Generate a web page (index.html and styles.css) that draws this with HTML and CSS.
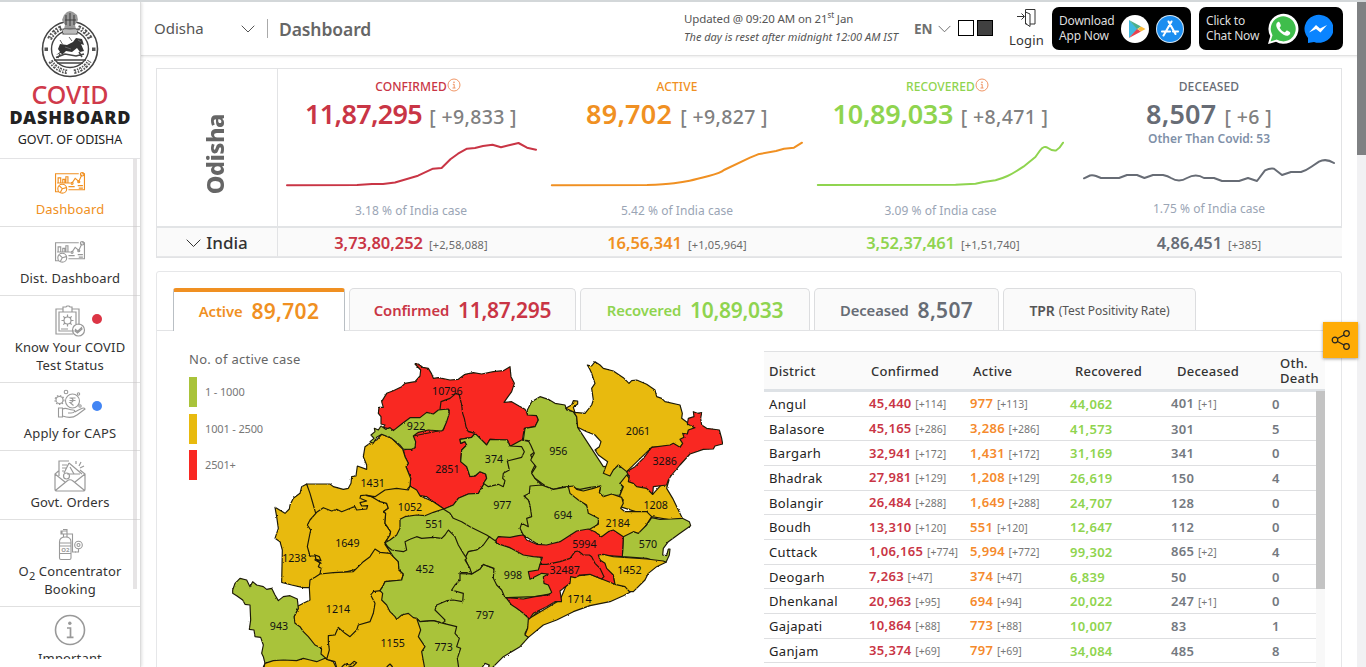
FILE: index.html
```html
<!DOCTYPE html>
<html lang="en">
<head>
<meta charset="utf-8">
<title>COVID Dashboard - Govt. of Odisha</title>
<link rel="stylesheet" href="styles.css">
</head>
<body>
<svg class="defs" width="0" height="0">
  <defs>
    <g id="ic-dash" fill="none" stroke="currentColor" stroke-width="1.1">
      <path d="M5 20H1.500V2.500H24M27 2.500H29.500V18H14"/>
      <path d="M3 11.500H16M4 11V6.500H6.500V11M8.500 11V8H10.500V11M11.500 11V5.500H13.500V11"/>
      <path d="M17.500 11.500L20.500 7L24 10L27 3.500"/><circle cx="27.300" cy="3" r="1.700"/><circle cx="24" cy="10.300" r="1"/><circle cx="17.500" cy="11.800" r="1"/>
      <circle cx="8" cy="17" r="4.300"/><path d="M8 17L5 14M8 17L12 16M8 17L6 21"/><path d="M14 15H20M23 14H28M24 16.500H28"/>
    </g>
    <g id="ic-info"><circle cx="7" cy="7" r="6" fill="none" stroke="currentColor" stroke-width=".9"/><circle cx="7" cy="4.200" r=".8" fill="currentColor"/><path d="M5.800 6.300H7.200V10M5.500 10H8.500" fill="none" stroke="currentColor" stroke-width=".9"/></g>
  </defs>
</svg>
<div class="page">
  <aside class="side">
    <div class="brand">
      <svg class="seal" width="58" height="70" viewBox="0 0 58 70">
        <circle cx="29" cy="38" r="27.500" fill="#fff" stroke="#444" stroke-width="1.600"/>
        <path d="M8.500 28A23 23 0 0 1 21 16.500M37 16.500A23 23 0 0 1 49.500 28" fill="none" stroke="#555" stroke-width="5" stroke-dasharray="2.600 1.200 1.800 1.400"/>
        <path d="M8.500 28A23 23 0 0 1 21 16.500M37 16.500A23 23 0 0 1 49.500 28" fill="none" stroke="#fff" stroke-width="1.300" stroke-dasharray="1.600 1.700"/>
        <path d="M9.500 50A23 23 0 0 0 26 60.800M33 60.800A23 23 0 0 0 48.500 50" fill="none" stroke="#555" stroke-width="4.600" stroke-dasharray="2.200 1.300 1.500 1.100"/>
        <path d="M9.500 50A23 23 0 0 0 26 60.800M33 60.800A23 23 0 0 0 48.500 50" fill="none" stroke="#fff" stroke-width="1.200" stroke-dasharray="1.300 1.900"/>
        <circle cx="29" cy="38" r="18.500" fill="#fff" stroke="#444" stroke-width="1.400"/>
        <rect x="3.500" y="36.500" width="3.500" height="3.500" fill="#555"/><rect x="51" y="36.500" width="3.500" height="3.500" fill="#555"/>
        <path d="M15 44L19 41L17 38L19 33L26 34L32 31L35 27L41 28L43 34L40 33L43 40L39 41L36 37L31 41L25 40L21 44L20 42Z" fill="#333"/>
        <path d="M31 30L28 26M22 34L19 29M37 29L40 31M24 36L30 38" stroke="#666" stroke-width="1" fill="none"/>
        <path d="M13 49H45M16 52H42M15 46.500L24 43L35 45L43 43M19 43L17 47M38 41L41 46" stroke="#444" stroke-width="1.500" fill="none"/>
        <path d="M23 4L26 1L29 0L32 1L36 4L37 9L34 14L35 18H23L24 14L21 9Z" fill="#999"/>
        <path d="M25 4V14M29 2V15M33 4V14M24 9H35M22 18H36V23H22Z" stroke="#444" stroke-width="1.100" fill="none"/>
        <path d="M22 19H36V22H22Z" fill="#bbb"/>
      </svg>
      <div class="covid">COVID</div>
      <div class="dash">DASHBOARD</div>
      <div class="govt">GOVT. OF ODISHA</div>
    </div>
    <nav class="nav">
      <a class="item on"><svg width="32" height="24" viewBox="0 0 31 23"><use href="#ic-dash"/></svg><span>Dashboard</span></a>
      <a class="item"><svg width="32" height="24" viewBox="0 0 31 23"><use href="#ic-dash"/></svg><span>Dist. Dashboard</span></a>
      <a class="item tall"><i class="dot red"></i>
        <svg width="32" height="32" viewBox="0 0 32 32" fill="none" stroke="currentColor" stroke-width="1.200"><path d="M19 29H2V4H9V2H12L13 1H15L16 2H18V4H25V20M20 26H5V7H22V19M9 4V7H18V4"/><circle cx="13.500" cy="15.500" r="3.500"/><path d="M13.500 9.500V12M13.500 19V21.500M7.500 15.500H10M17 15.500H19.500M9.300 11.300L11 13M16 18L17.700 19.700M17.700 11.300L16 13M9.300 19.700L11 18M7 24H14"/><circle cx="24.500" cy="25" r="6"/><path d="M21.500 24.500L23.500 26.500L27.500 22.500L28 24L23.500 28L21 26Z"/></svg>
        <span>Know Your COVID<br>Test Status</span></a>
      <a class="item"><i class="dot blue"></i>
        <svg width="32" height="30" viewBox="0 0 32 30" fill="none" stroke="currentColor" stroke-width="1.100"><circle cx="18.500" cy="12" r="7"/><path d="M15.500 9H21.500M15.500 11.500H21.500M16 9C20 9 20 13.500 16 13.500L19.500 16.500"/><circle cx="5.500" cy="11" r="3.500"/><circle cx="5.500" cy="11" r="4.500" stroke-dasharray="1.500 1.500"/><circle cx="12" cy="3" r="1.800"/><circle cx="24.500" cy="5" r="1.200"/><circle cx="26" cy="17" r="1.200"/><path d="M4.500 19H8.500V28H4.500ZM8.500 20C13 18 14 21 19 21C22 21 21 24 17 24H14M8.500 27C14 29 19 29 23 26L31 20C30 18 28 19 21 23"/></svg>
        <span>Apply for CAPS</span></a>
      <a class="item go">
        <svg width="32" height="32" viewBox="0 0 32 32" fill="none" stroke="currentColor" stroke-width="1.200"><path d="M4.500 11L1 14V29Q1 31 3 31H29Q31 31 31 29V14L26 10M1 14L11 22M31 14L21 22M2 30L13 21Q16 18.500 19 21L30 30M5 16V1H15M8 5H13M8 8H12M8 11H10M15 3L28 14M15 3L10 13M13 14L26 14"/><circle cx="12.500" cy="16" r="3"/><path d="M22 4V1M25 6L27 2M26 8L30 6M16 7L20 14"/></svg>
        <span>Govt. Orders</span></a>
      <a class="item tall o2">
        <svg width="32" height="32" viewBox="0 0 32 32" fill="none" stroke="currentColor" stroke-width="1.100"><path d="M5.500 29V13Q5.500 8 11.500 8Q17 8 17 13V29Q17 30.500 15.500 30.500H7Q5.500 30.500 5.500 29ZM5.500 14H17M5.500 17H17M5.500 24.500H17M9.500 8V5H13V8M9.500 5H7V2H13V5H18.500V23H22M13 2V0.500H9M8 2V5"/><circle cx="24.500" cy="16" r="3.800"/><circle cx="24.500" cy="16" r="1.500"/><path d="M24.500 20V23H21"/><text x="7.200" y="23" class="o2t">O2</text></svg>
        <span>O<sub>2</sub> Concentrator<br>Booking</span></a>
      <a class="item last">
        <svg width="32" height="32" viewBox="0 0 32 32"><circle cx="16" cy="16" r="14.500" fill="none" stroke="currentColor" stroke-width="1.600"/><circle cx="15.800" cy="9.300" r="1.700" fill="currentColor"/><path d="M13 14H16.500V23M12.800 23.300H19.500" fill="none" stroke="currentColor" stroke-width="1.700"/></svg>
        <span>Important</span></a>
      <i class="navbar"></i>
    </nav>
  </aside>
  <div class="body">
    <header class="top">
      <div class="state"><span>Odisha</span><svg width="14" height="8" viewBox="0 0 14 8"><path d="M.7.7L7 7L13.300.7" fill="none" stroke="#555" stroke-width="1"/></svg></div>
      <h1>Dashboard</h1>
      <div class="upd"><div>Updated @ 09:20 AM on 21<sup>st</sup> Jan</div><em>The day is reset after midnight 12:00 AM IST</em></div>
      <div class="lang">EN<svg width="13" height="8" viewBox="0 0 14 8"><path d="M.7.7L7 7L13.300.7" fill="none" stroke="#666" stroke-width="1"/></svg></div>
      <div class="theme"><i></i><i class="dk"></i></div>
      <div class="login"><svg width="20" height="20" viewBox="0 0 20 20" fill="none" stroke="#333" stroke-width="1"><path d="M0 8.500H7M4.500 5.500L7.500 8.500L4.500 11.500M8.500 5V1.500H18V16H13M8.500 12V16H10M13 18.500L8.500 15.500V4L13 6Z"/></svg><span>Login</span></div>
      <div class="pill p1"><span>Download<br>App Now</span>
        <svg width="28" height="28" viewBox="0 0 28 28"><circle cx="14" cy="14" r="14" fill="#fff"/><path d="M8 5V23L17 14Z" fill="#3fb9e0"/><path d="M8 5L16 14L20 11.500Z" fill="#4cae8a"/><path d="M8 23L16 14L20 16.500Z" fill="#e8414e"/><path d="M20 11.500L24.500 14L20 16.500L16.500 14Z" fill="#f8b93b"/></svg>
        <svg width="28" height="28" viewBox="0 0 28 28"><circle cx="14" cy="14" r="14" fill="#d5e6f5"/><circle cx="14" cy="14" r="13" fill="#1c8ef0"/><path d="M15.500 6.500L9 18M12.500 6.500L19.500 19M6 16.500H14M17 16.500H22M8.300 19.200L7.500 20.500" stroke="#fff" stroke-width="2.100" stroke-linecap="round"/></svg>
      </div>
      <div class="pill p2"><span>Click to<br>Chat Now</span>
        <svg width="32" height="32" viewBox="0 0 32 32"><path d="M1 31L3.300 23A15 15 0 1 1 9 28.800Z" fill="#fff"/><path d="M3.500 28.500L5.500 22.300A12.500 12.500 0 1 1 9.800 26.600Z" fill="#3fbd4b"/><path d="M11 9C8 11 9 15 13 19C17 23 21 24 23 21C24 19 22 18.500 20 17.500C19 17 18.500 20 17 19C15 18 13.500 16.500 12.800 15C12.500 14 14.500 13.500 13.500 11.500C13 10 12.300 8 11 9Z" fill="#fff"/></svg>
        <svg width="30" height="30" viewBox="0 0 30 30"><path d="M5 29V24A14.500 14 0 1 1 11 28Z" fill="#0a84ff"/><path d="M6 18.500L13 11L17 14.500L24 11L17.500 18.500L13 15Z" fill="#fff"/></svg>
      </div>
    </header>
    <main class="main">
      <section class="stats">
        <div class="st"><span>Odisha</span></div>
        <div class="col c-red"><h2>CONFIRMED<svg width="14" height="14" viewBox="0 0 14 14"><use href="#ic-info"/></svg></h2><p class="num n1">11,87,295 <small>[ +9,833 ]</small></p>
          <svg class="sp" viewBox="278 131 266 60"><path d="M287 184.300L357 184L372 183L383 183L395 181.500L418 174.700L433 167.700L441.600 167L450.400 158.300L458 152.700L467 147.700L475 147L483 145L492.500 143.700L501 146.300L510 144L518.500 142L527 146.700L536 148.700"/></svg>
          <p class="pct">3.18 % of India case</p></div>
        <div class="col c-org"><h2>ACTIVE</h2><p class="num n2">89,702 <small>[ +9,827 ]</small></p>
          <svg class="sp" viewBox="544 131 266 60"><path d="M551.800 184.300L647 184Q665 183.500 674 182.300T689.600 179.700T708.700 175T724 169L750 156.700L758 153.300L776 150L784 147.700L794 146.700L802 141.700"/></svg>
          <p class="pct">5.42 % of India case</p></div>
        <div class="col c-grn sh"><h2>RECOVERED<svg width="14" height="14" viewBox="0 0 14 14"><use href="#ic-info"/></svg></h2><p class="num n3">10,89,033 <small>[ +8,471 ]</small></p>
          <svg class="sp" viewBox="810 131 266 60"><path d="M817.800 184L955.600 183.700L975.500 182.700L983.500 181L995.500 179.300Q1002 177.500 1007.500 175T1023.400 165.700L1035.400 156L1040 149.500Q1044 144 1048 147T1056 149.500Q1060 147 1063 141.700"/></svg>
          <p class="pct">3.09 % of India case</p></div>
        <div class="col c-gry dec"><h2>DECEASED</h2><p class="num n4">8,507 <small>[ +6 ]</small></p>
          <svg class="sp" viewBox="1076 131 266 60"><path d="M1084 177.300L1090 174.500Q1093 174 1096 175L1101 177H1119L1127 174H1137L1144.400 177L1153 174H1163Q1168 175 1171 177Q1179 182 1187 177Q1196 172 1204 177H1214L1222 180H1239L1248 177L1257 180L1265 169.300Q1270 167 1274 167.700L1282 174L1291 171H1301Q1307 169 1311 166L1319 160.700Q1326 157 1334 162"/></svg>
          <b class="other">Other Than Covid: 53</b>
          <p class="pct">1.75 % of India case</p></div>
        <div class="ind lab"><svg width="15" height="9" viewBox="0 0 15 9"><path d="M.7.7L7.500 7.500L14.300.7" fill="none" stroke="#333"/></svg>India</div>
        <div class="ind c-red">3,73,80,252<small>[+2,58,088]</small></div>
        <div class="ind c-org">16,56,341<small>[+1,05,964]</small></div>
        <div class="ind c-grn">3,52,37,461<small>[+1,51,740]</small></div>
        <div class="ind c-gry">4,86,451<small>[+385]</small></div>
      </section>
      <section class="panel">
        <div class="tabs">
          <div class="tab act c-org t1">Active<b>89,702</b></div>
          <div class="tab c-red t2">Confirmed<b>11,87,295</b></div>
          <div class="tab c-grn t3">Recovered<b>10,89,033</b></div>
          <div class="tab c-gry t4">Deceased<b>8,507</b></div>
          <div class="tab c-tpr t5">TPR<small>(Test Positivity Rate)</small></div>
        </div>
        <div class="content">
          <div class="mapbox">
            <div class="leg"><h3>No. of active case</h3>
              <div><i class="k1"></i>1 - 1000</div><div><i class="k2"></i>1001 - 2500</div><div><i class="k3"></i>2501+</div>
            </div>
            <svg class="map" width="520" height="317" viewBox="0 0 1560 951">
              <defs><filter id="rough" x="0" y="0" width="100%" height="100%" color-interpolation-filters="sRGB"><feTurbulence type="fractalNoise" baseFrequency="0.16" numOctaves="2" seed="4"/><feDisplacementMap in="SourceGraphic" scale="6" xChannelSelector="R" yChannelSelector="G"/></filter></defs>
              <g class="shapes" filter="url(#rough)">
                <path class="g base" d="M500 560L740 600L1000 740L730 945L600 830L500 760Z"/>
                <path class="g base" d="M1150 350L1225 372L1215 430L1130 430L700 470L900 300Z"/>
                <path class="y base" d="M300 480L500 440L560 500L500 720L320 800L270 700Z"/>
                <path class="r" d="M585 42L595 42L608 52L625 55L634 70L640 85L655 83L690 90L715 88L735 73L760 68L785 72L820 65L850 62L870 50L873 80L883 100L875 125L862 143L852 157L875 155L897 168L915 178L922 192L950 195L955 210L945 230L913 235L908 265L905 288L870 288L862 270L810 268L800 285L790 275L765 250L745 245L600 300L520 240L490 232L495 225L483 222L483 200L475 190L477 172L490 172L485 155L500 130L520 122L545 110L555 100L585 95L600 78L602 60Z"/>
                <path class="r" d="M585 293L580 258L670 240L688 180L660 178L663 155L690 145L708 130L718 135L725 165L728 190L733 205L738 230L745 245L765 250L755 262L720 268L722 280L735 275L740 285L725 300L722 335L740 350L750 380L765 378L780 365L797 372L800 385L790 405L775 430L745 432L715 445L700 465L672 477L640 455L620 440L600 437L570 408L572 385L558 350L565 340L555 320L550 300Z"/>
                <path class="y" d="M165 472L175 478L195 490L208 477L210 465L220 445L240 430L245 410L260 402L300 480L310 680L268 713L250 713L215 705L185 697L187 600L180 575L165 565L175 535L170 500Z"/>
                <path class="y" d="M260 402L330 402L340 410L370 418L385 415L393 400L395 380L408 378L412 348L440 358L440 345L430 320L435 290L450 280L470 270L485 253L515 265L548 297L555 320L565 340L558 350L572 385L570 408L560 420L480 480L440 500L290 500L280 465L270 430Z"/>
                <path class="g" d="M450 275L462 265L453 255L465 245L463 235L475 240L483 228L497 238L510 233L520 242L545 222L570 203L600 203L620 187L640 192L655 180L685 177L688 190L680 215L670 238L665 243L625 240L595 247L580 258L587 275L585 293L575 298L550 297L540 285L515 265L485 253L470 262L460 280Z"/>
                <path class="y" d="M290 487L310 473L335 483L350 478L365 485L395 473L405 470L410 480L440 477L443 467L425 468L420 458L440 453L420 445L422 437L440 435L455 440L500 460L505 475L490 485L497 490L495 520L512 545L510 555L495 578L520 620L480 640L340 675L300 672L303 655L295 650L300 638L285 630L290 618L270 618L262 590L272 540L262 525L270 510Z"/>
                <path class="y" d="M440 437L465 440L495 420L530 415L565 420L570 408L590 420L600 437L640 455L672 477L640 510L550 580L495 578L510 555L512 545L495 520L497 490L490 485L505 475L500 460L480 455L455 440Z"/>
                <path class="y" d="M300 672L340 668L400 665L410 655L430 635L450 620L465 597L480 607L510 610L520 620L535 635L537 660L550 672L545 690L515 693L495 695L488 710L480 722L470 760L450 830L325 925L308 925L222 820L222 800L235 775L230 770L250 760L270 750L268 713L270 690L285 682Z"/>
                <path class="g" d="M38 720L45 700L60 685L80 690L90 710L98 695L110 705L130 710L140 718L155 715L165 735L175 752L190 740L210 737L232 747L235 775L222 800L225 820L240 830L250 845L265 860L285 885L305 895L303 912L318 925L315 940L130 951L135 940L130 920L125 910L130 885L122 862L105 860L102 840L88 838L92 810L90 765L75 763L68 750L50 737L38 730Z"/>
                <path class="y" d="M130 960L135 940L160 932L190 930L230 932L250 925L270 930L290 935L315 925L340 935L352 960Z"/>
                <path class="y" d="M480 722L460 725L452 735L465 760L460 790L450 815L415 825L410 840L390 860L375 850L355 832L345 855L325 857L325 875L328 900L320 928L345 935L352 960L620 960L640 820L560 740Z"/>
                <path class="l" d="M365 951L375 942L390 945L402 934L410 938L400 948L385 951M500 951L510 942L518 951"/>
                <path class="y" d="M265 612L272 620M285 615L298 620L303 632L288 628ZM290 630L303 640L292 632"/>
                <path class="g" d="M672 477L700 465L715 445L745 432L775 430L790 405L850 300L905 270L930 275L945 305L932 315L945 345L935 365L945 385L965 405L960 560L865 565L828 570L810 600L740 640L700 560Z"/>
                <path class="g" d="M765 250L790 275L800 285L810 268L862 270L870 288L905 290L913 305L905 322L862 333L868 360L850 370L848 385L855 392L850 410L835 403L805 410L790 400L800 385L797 372L780 365L765 378L750 380L740 350L722 335L725 300L740 285L735 275L722 280L720 268L755 262Z"/>
                <path class="g" d="M922 180L935 155L960 140L985 148L1005 160L1035 165L1040 180L1060 185L1070 200L1073 232L1150 350L1220 345L1225 390L1200 400L1208 410L1200 435L1175 437L1150 440L1138 430L1142 408L1110 412L1080 418L1045 410L1025 412L1000 418L980 410L965 400L945 385L935 370L948 350L932 330L943 310L932 285L925 272L910 270L915 235L945 230L955 210L950 197L922 195Z"/>
                <path class="g" d="M495 578L510 570L530 555L540 535L540 508L555 500L590 495L615 497L640 487L670 477L690 490L700 505L725 515L750 530L800 555L810 562L805 575L790 590L770 600L745 605L735 625L600 640L515 610Z"/>
                <path class="g" d="M755 672L780 657L790 643L822 655L1000 740L928 810L923 835L915 850L925 862L900 890L850 920L810 960L700 960L600 800L690 670Z"/>
                <path class="g" d="M735 625L745 605L770 600L790 585L808 560L830 575L870 593L960 620L985 660L1000 730L945 740L855 743L845 720L830 705L820 685L822 655L800 647L790 643L780 657L755 672Z"/>
                <path class="g" d="M495 583L515 600L550 605L560 600L555 575L570 568L590 560L605 565L640 562L665 565L675 555L685 540L695 550L705 560L715 585L730 610L740 625L735 630L750 655L755 672L740 668L720 668L720 690L705 705L695 720L730 730L728 755L700 750L680 752L650 765L645 780L665 800L675 810L670 820L640 812L600 815L590 805L580 803L565 790L545 795L530 808L525 800L510 785L500 765L485 750L488 730L480 722L488 710L495 695L545 690L550 672L537 660L535 635L520 620Z"/>
                <path class="g" d="M590 805L600 815L640 812L670 820L710 830L705 850L718 865L710 890L722 895L712 925L717 960L615 960L605 905L615 890L605 875L595 860L602 840Z"/>
                <path class="g" d="M912 438L928 430L930 408L965 405L1000 418L1045 410L1140 510L1110 560L980 600L910 555L900 535L905 520L925 530L920 505L935 500L930 465L925 450Z"/>
                <path class="y" d="M1102 45L1115 48L1125 35L1140 45L1150 55L1180 63L1210 83L1227 100L1235 92L1250 90L1280 103L1305 120L1310 140L1325 145L1335 155L1380 165L1387 190L1385 205L1425 235L1380 292L1350 288L1295 292L1220 365L1195 345L1180 360L1170 378L1150 370L1163 335L1135 315L1125 300L1138 290L1143 275L1125 255L1100 245L1073 232L1070 200L1060 185L1037 175L1055 165L1060 152L1073 153L1073 162L1060 172L1065 187L1095 190L1115 165L1120 150L1115 115L1125 100L1115 70L1108 55Z"/>
                <path class="y" d="M1220 375L1235 395L1280 415L1298 433L1335 392L1347 390L1340 415L1358 445L1375 480L1387 505L1355 510L1295 500L1200 470L1210 450L1198 440L1210 410L1200 400Z"/>
                <path class="r" d="M1220 365L1245 350L1270 325L1295 292L1350 285L1360 280L1380 292L1388 280L1380 268L1392 262L1388 250L1402 252L1405 240L1425 233L1402 222L1405 205L1422 200L1420 185L1432 190L1445 188L1442 205L1445 225L1460 235L1498 240L1505 265L1508 282L1485 288L1480 297L1450 298L1410 312L1380 345L1355 375L1345 390L1340 405L1300 410L1298 433L1280 415L1250 410L1240 400L1225 395L1228 380Z"/>
                <path class="y" d="M1045 410L1060 408L1070 418L1090 423L1120 415L1142 408L1138 428L1150 440L1175 432L1205 442L1210 460L1202 475L1215 485L1250 485L1280 485L1295 500L1250 570L1150 570L1105 540L1135 523L1135 505L1105 490L1100 465L1075 450L1050 430Z"/>
                <path class="g" d="M1210 560L1240 545L1255 550L1280 525L1295 503L1320 508L1355 507L1387 505L1408 515L1412 527L1380 550L1345 575L1330 595L1328 615L1340 617L1345 597L1350 597L1348 615L1338 637L1310 635L1280 625L1207 620Z"/>
                <path class="r" d="M828 570L835 560L870 562L895 557L910 555L920 570L950 583L980 585L1020 575L1070 543L1105 537L1125 545L1145 560L1165 545L1180 540L1210 560L1207 620L1140 615L1180 675L1185 703L1120 690L960 643L967 622L940 620L910 615L870 593L830 580Z"/>
                <path class="y" d="M1135 615L1150 613L1180 620L1280 627L1330 633L1338 637L1310 650L1285 670L1275 690L1240 725L1230 725L1185 703L1180 675L1160 655L1155 640L1140 630Z"/>
                <path class="y" d="M925 807L1020 750L1050 680L1110 673L1145 687L1185 703L1215 710L1230 727L1210 737L1170 755L1110 767L1060 785L1010 810L970 825L925 862L915 855L923 835Z"/>
                <path class="r" d="M925 665L955 660L960 643L980 643L1020 635L1050 625L1065 605L1075 603L1090 615L1108 615L1115 620L1125 640L1140 655L1152 680L1145 687L1110 673L1080 675L1065 683L1052 680L1050 700L1030 715L1020 723L1025 755L1005 755L980 770L940 790L928 807L910 790L890 775L875 765L858 743L910 747L945 740L985 735L995 727L985 705L972 700L970 680L985 672L965 670L930 688Z"/>
                <path class="w" d="M785 954L795 940L808 945L805 954"/>
              </g>
              <g class="mt">
                <text x="682" y="134">10796</text><text x="588" y="240">922</text><text x="682" y="368">2851</text><text x="458" y="410">1431</text><text x="570" y="482">1052</text>
                <text x="822" y="338">374</text><text x="1015" y="314">956</text><text x="1254" y="254">2061</text><text x="1334" y="344">3286</text><text x="847" y="476">977</text><text x="1307" y="476">1208</text>
                <text x="643" y="533">551</text><text x="382" y="590">1649</text><text x="223" y="635">1238</text><text x="615" y="668">452</text><text x="354" y="788">1214</text><text x="177" y="839">943</text><text x="518" y="890">1155</text><text x="671" y="902">773</text>
                <text x="795" y="806">797</text><text x="1029" y="506">694</text><text x="1193" y="530">2184</text><text x="1093" y="594">5994</text><text x="1284" y="593">570</text><text x="879" y="686">998</text><text x="1034" y="671">32487</text><text x="1228" y="671">1452</text><text x="1078" y="758">1714</text>
              </g>
            </svg>
          </div>
          <div class="tbl">
            <div class="tr th"><span>District</span><span>Confirmed</span><span>Active</span><span>Recovered</span><span>Deceased</span><span>Oth.<br>Death</span></div>
            <div class="scroll"><div class="rows">
            <div class="tr"><span>Angul</span><b>45,440 <s>[+114]</s></b><b>977 <s>[+113]</s></b><b>44,062</b><b>401 <s>[+1]</s></b><b>0</b></div>
            <div class="tr"><span>Balasore</span><b>45,165 <s>[+286]</s></b><b>3,286 <s>[+286]</s></b><b>41,573</b><b>301</b><b>5</b></div>
            <div class="tr"><span>Bargarh</span><b>32,941 <s>[+172]</s></b><b>1,431 <s>[+172]</s></b><b>31,169</b><b>341</b><b>0</b></div>
            <div class="tr"><span>Bhadrak</span><b>27,981 <s>[+129]</s></b><b>1,208 <s>[+129]</s></b><b>26,619</b><b>150</b><b>4</b></div>
            <div class="tr"><span>Bolangir</span><b>26,484 <s>[+288]</s></b><b>1,649 <s>[+288]</s></b><b>24,707</b><b>128</b><b>0</b></div>
            <div class="tr"><span>Boudh</span><b>13,310 <s>[+120]</s></b><b>551 <s>[+120]</s></b><b>12,647</b><b>112</b><b>0</b></div>
            <div class="tr"><span>Cuttack</span><b>1,06,165 <s>[+774]</s></b><b>5,994 <s>[+772]</s></b><b>99,302</b><b>865 <s>[+2]</s></b><b>4</b></div>
            <div class="tr"><span>Deogarh</span><b>7,263 <s>[+47]</s></b><b>374 <s>[+47]</s></b><b>6,839</b><b>50</b><b>0</b></div>
            <div class="tr"><span>Dhenkanal</span><b>20,963 <s>[+95]</s></b><b>694 <s>[+94]</s></b><b>20,022</b><b>247 <s>[+1]</s></b><b>0</b></div>
            <div class="tr"><span>Gajapati</span><b>10,864 <s>[+88]</s></b><b>773 <s>[+88]</s></b><b>10,007</b><b>83</b><b>1</b></div>
            <div class="tr"><span>Ganjam</span><b>35,374 <s>[+69]</s></b><b>797 <s>[+69]</s></b><b>34,084</b><b>485</b><b>8</b></div>
            </div><div class="bar"><i></i></div></div>
          </div>
        </div>
      </section>
    </main>
  </div>
  <div class="track"><i></i></div>
  <div class="share"><svg width="20" height="22" viewBox="0 0 20 22" fill="none" stroke="#222" stroke-width="1.200"><circle cx="4" cy="11" r="2.800"/><circle cx="15.500" cy="4.500" r="2.800"/><circle cx="15.500" cy="17.500" r="2.800"/><path d="M6.500 9.600L13 5.900M6.500 12.400L13 16.100"/></svg></div>
</div>
</body>
</html>
```
FILE: styles.css
```css
* { box-sizing: border-box; margin: 0; padding: 0; }
body { font-family: "Segoe UI", "Noto Sans", sans-serif; background: #fff; overflow: hidden; color: #333; }
.defs { position: absolute; }
.page { position: relative; display: flex; width: 1366px; height: 667px; border-top: 2px solid #d3d7d9; overflow: hidden; }

.side { width: 141px; flex: none; border-right: 1px solid #dcdcdc; box-shadow: 1px 0 3px rgba(0,0,0,.13); display: flex; flex-direction: column; z-index: 2; background: #fff; }
.brand { height: 157px; padding-top: 9px; border-bottom: 1px solid #e3e3e5; text-align: center; flex: none; }
.seal { display: block; margin: 0 auto; }
.covid { color: #d03a4b; font-size: 25px; line-height: 26px; font-weight: 500; }
.dash { color: #222; font-size: 18px; line-height: 21px; font-weight: 900; letter-spacing: .8px; margin-right: -.8px; }
.govt { font-size: 12.5px; line-height: 24px; color: #222; letter-spacing: -.1px; }
.nav { height: 500px; position: relative; overflow: hidden; }
.item { position: relative; height: 68.4px; border-bottom: 1px solid #e0e0e0; display: flex; flex-direction: column; align-items: center; justify-content: flex-end; padding-bottom: 7.500px; color: #999; }
.item span { color: #333; font-size: 13px; line-height: 18.500px; letter-spacing: .15px; text-align: center; }
.item.on, .item.on span { color: #f09022; }
.item svg { margin-bottom: 5px; flex: none; }
.item.tall { height: 87px; padding-bottom: 7px; }
.item.tall svg { margin-bottom: 1px; }
.item.go svg { margin-bottom: 1px; }
.item.last { border: 0; justify-content: flex-start; padding: 7px 0 0; height: 52px; overflow: hidden; }
.item.last svg { margin-bottom: 3px; }
.item sub { font-size: 11px; line-height: 0; }
.o2t { font-size: 6px; font-weight: 700; fill: #999; stroke: none; }
.dot { position: absolute; left: 92px; top: 18px; width: 10px; height: 10px; border-radius: 50%; }
.red { background: #dc3545; } .blue { background: #4285f4; }
.navbar { position: absolute; right: 3px; top: 0; width: 4px; height: 430px; background: rgba(200,196,198,.45); }

.body { flex: 1; min-width: 0; display: flex; flex-direction: column; }
.top { height: 54px; flex: none; display: flex; align-items: center; border-bottom: 1px solid #e2e2e2; box-shadow: 0 1px 2px rgba(0,0,0,.08); padding-left: 13px; color: #555; }
.state { width: 114px; height: 19px; display: flex; align-items: center; justify-content: space-between; padding-right: 12px; border-right: 1px solid #aaa; font-size: 15px; }
.state span { padding-bottom: 2px; }
.top h1 { font-size: 17.5px; font-weight: 600; margin-left: 11px; width: 405px; color: #666; letter-spacing: -.1px; }
.upd { width: 230px; font-size: 11.500px; line-height: 18px; letter-spacing: -.12px; white-space: nowrap; margin-top: -1px; }
.upd em { display: block; font-size: 11px; letter-spacing: 0; }
.upd sup { font-size: 8px; line-height: 0; }
.lang { width: 44px; font-size: 13.500px; font-weight: 700; display: flex; align-items: center; gap: 5px; color: #707070; }
.theme { display: flex; gap: 3px; width: 51px; margin-top: -1px; }
.theme i { width: 16px; height: 16px; border: 1px solid #000; }
.theme .dk { background: #404040; }
.login { width: 35px; display: flex; flex-direction: column; align-items: center; font-size: 13px; line-height: 19px; margin-right: 8px; color: #333; letter-spacing: .2px; }
.login svg { margin: 1px 0 3px; }
.pill { height: 43px; border-radius: 7px; background: #000; color: #ddd; display: flex; align-items: center; font-size: 12px; line-height: 15px; padding-left: 7px; }
.pill span { white-space: nowrap; letter-spacing: -.2px; padding-bottom: 1px; }
.p1 { width: 139px; margin-right: 8px; }
.p1 span { width: 62px; } .p1 svg { margin-right: 7px; flex: none; }
.p2 { width: 144px; } .p2 span { width: 61px; } .p2 svg { flex: none; margin-right: 4px; }

.main { padding: 12px 25px 0 15px; flex: 1; }
.stats { width: 1186px; height: 190px; border: 1px solid #e2e3e5; display: grid; grid-template-columns: 121px repeat(4, 1fr); grid-template-rows: 157px 31px; }
.st { border-right: 1px solid #e2e3e5; display: flex; align-items: center; justify-content: center; padding: 13px 5px 0 0; }
.st span { writing-mode: vertical-rl; transform: rotate(180deg); font-size: 23.500px; font-weight: 800; color: #666; letter-spacing: -.4px; line-height: 30px; }
.c-red { color: #c93545; } .c-org { color: #f09022; } .c-grn { color: #8fd44f; } .c-gry { color: #676c75; } .c-tpr { color: #555; }
.col { display: flex; flex-direction: column; align-items: center; padding-top: 9px; position: relative; }
.col h2 { position: relative; font-size: 12px; line-height: 18px; font-weight: 500; letter-spacing: .1px; }
.col h2 svg { position: absolute; left: 100%; top: 0; color: #ee8a55; }
.num { font-size: 27px; line-height: 36px; font-weight: 600; white-space: nowrap; }
.num small { font-size: 19.500px; font-weight: 500; color: #808080; letter-spacing: .35px; margin-left: 1px; }
.n1 { letter-spacing: -.7px; } .n2 { letter-spacing: .2px; } .n3 { letter-spacing: -.3px; } .n4 { letter-spacing: .2px; }
.sp { width: 266px; height: 60px; margin-top: -3px; fill: none; stroke: currentColor; stroke-width: 2; stroke-linecap: round; stroke-linejoin: round; flex: none; }
.pct { font-size: 12px; line-height: 18px; color: #9aa5b5; letter-spacing: .04px; margin-top: 10px; }
.sh h2, .sh .num, .sh .pct { margin-left: -5px; }
.dec .pct { margin-top: 8px; }
.other { position: absolute; top: 61px; font-size: 12px; line-height: 18px; color: #8090a8; font-weight: 600; letter-spacing: 0; }
.ind { border-top: 2px solid #e2e4e6; border-bottom: 1px solid #e6e7e9; background: #fafafa; display: flex; align-items: center; justify-content: center; font-size: 16.500px; font-weight: 600; letter-spacing: -.05px; line-height: 28px; padding-top: 2px; }
.ind small { color: #6a6a6a; font-size: 11px; font-weight: 400; margin: 3px 0 0 6px; letter-spacing: .15px; }
.lab { border-right: 1px solid #e2e3e5; color: #333; gap: 5px; font-size: 17px; font-weight: 500; }

.panel { margin-top: 13px; width: 1186px; height: 420px; border: 1px solid #e6e7e9; border-radius: 3px; padding-top: 16px; }
.tabs { height: 43px; display: flex; gap: 4px; padding-left: 16px; border-bottom: 1px solid #e2e3e5; }
.tab { height: 42px; border: 1px solid #dcdddf; border-bottom: 0; border-radius: 5px 5px 0 0; background: #fafafa; display: flex; align-items: center; justify-content: center; padding-top: 1px; font-size: 14.800px; font-weight: 600; gap: 9px; letter-spacing: -.1px; }
.tab b { font-size: 21px; font-weight: 600; letter-spacing: -.3px; }
.tab.t1 b, .tab.t4 b { letter-spacing: .3px; }
.tab small { font-size: 12px; font-weight: 400; letter-spacing: -.05px; }
.act { background: #fff; border: 1px solid #b9bfc4; border-bottom: 0; border-top: 4px solid #f09022; height: 43px; padding-top: 0; padding-bottom: 1px; border-radius: 3px 3px 0 0; }
.t1 { width: 172px; } .t2 { width: 227px; } .t3 { width: 230px; } .t4 { width: 185px; } .t5 { width: 193px; gap: 4px; font-size: 14px; }
.content { display: flex; }
.mapbox { width: 607px; height: 337px; position: relative; flex: none; }
.leg { padding: 19px 0 0 32px; }
.leg h3 { font-size: 13px; font-weight: 400; line-height: 18px; color: #666; margin-bottom: 9px; letter-spacing: .3px; }
.leg div { display: flex; align-items: center; gap: 8px; font-size: 11px; color: #777; height: 30px; margin-bottom: 6.600px; letter-spacing: -.15px; line-height: 26px; }
.leg i { width: 8px; height: 30px; }
.k1 { background: #a9c33a; } .k2 { background: #e8ba0e; } .k3 { background: #f92822; }
.map { position: absolute; left: 63px; top: 19px; }
.shapes path { stroke: #1d1a08; stroke-width: 3.500; stroke-linejoin: round; }
.shapes .base { stroke: none; }
.r { fill: #f92822; } .y { fill: #e8ba0e; } .g { fill: #a9c33a; } .w { fill: #fff; } .l { fill: none; }
.mt { font-size: 32px; text-anchor: middle; fill: #111; }

.tbl { width: 561px; margin-top: 20px; }
.tr { display: grid; grid-template-columns: 100px 101px 100px 101px 101px 1fr; padding-left: 5px; height: 24.680px; border-bottom: 1px solid #dedfe1; align-items: center; font-size: 13px; white-space: nowrap; line-height: 18px; }
.tr > span { letter-spacing: .35px; color: #222; }
.tr b { font-weight: 600; letter-spacing: .3px; color: #747980; }
.tr b:nth-child(2) { color: #c93545; } .tr b:nth-child(3) { color: #f58a2c; } .tr b:nth-child(4) { color: #8fd44f; }
.tr s { text-decoration: none; font-size: 10.500px; font-weight: 400; color: #777; letter-spacing: 0; }
.tr.th { grid-template-columns: 102px 102px 102px 102px 103px 1fr; height: 41px; border-top: 1px solid #e0e1e3; border-bottom: 3px solid #dee2e6; background: #fafafa; line-height: 15px; padding-top: 1px; }
.tr.th span { font-weight: 500; color: #333; letter-spacing: .25px; }
.scroll { display: flex; height: 290px; overflow: hidden; margin-top: -1px; }
.rows { width: 552px; padding-top: 1px; }
.bar { width: 9px; background: #f8f8f8; } .bar i { display: block; height: 198px; background: #c3c3c3; }
.track { position: absolute; right: 0; top: 0; width: 9px; height: 665px; background: #f1f1f3; }
.track i { display: block; height: 153px; background: #7f8183; }
.share { position: absolute; left: 1323px; top: 320px; width: 35px; height: 36px; background: #ffac06; display: flex; align-items: center; justify-content: center; box-shadow: 0 1px 3px rgba(0,0,0,.4); }
```
